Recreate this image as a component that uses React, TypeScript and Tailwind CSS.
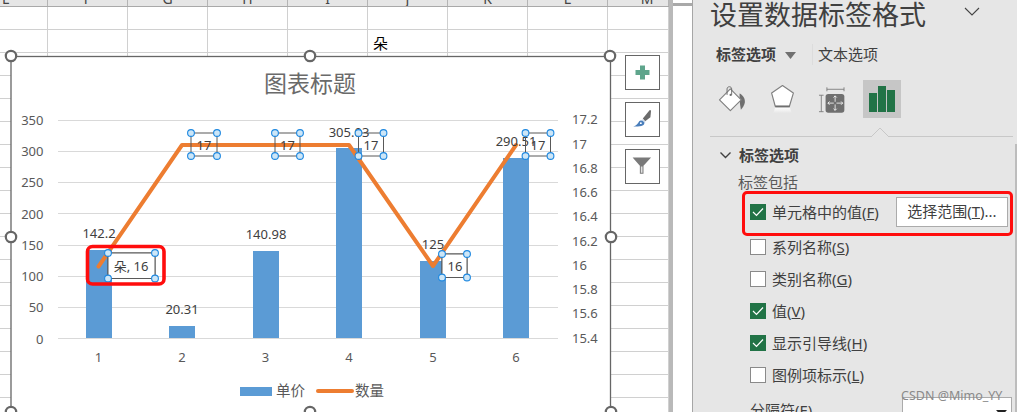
import React from "react";

const colWidths = [48, 80, 80, 80, 80, 80, 80, 80, 61];
const colLetters = ["E", "F", "G", "H", "I", "J", "K", "L", "M"];
const letterOffset = ["pr-[35px]", "pl-0", "pl-0", "pl-0", "pl-0", "pl-0", "pl-0", "pl-0", "pl-[18px]"];
const rowIndexes = Array.from({ length: 18 }, (_, i) => i);

const gridYs = [120.5, 151.5, 182.5, 213.5, 245.5, 276.5, 307.5, 338.5];
const leftAxis = ["350", "300", "250", "200", "150", "100", "50", "0"];
const leftAxisY = [120, 151, 182, 214, 245, 276, 307, 339];
const rightAxis: [string, number][] = [
  ["17.2", 119.5], ["17", 144], ["16.8", 168.5], ["16.6", 192.5], ["16.4", 216.5],
  ["16.2", 241], ["16", 265.5], ["15.8", 289.5], ["15.6", 313.5], ["15.4", 338],
];
const bars: [number, number][] = [[86, 250], [169, 326], [253, 251], [336, 148], [420, 261], [503, 158]];
const xLabels: [string, number][] = [["1", 98.5], ["2", 182], ["3", 265.5], ["4", 349], ["5", 433], ["6", 516]];
const valueLabels: [string, number, number][] = [
  ["142.2", 99, 233.5], ["20.31", 182, 309.5], ["140.98", 266, 234.5],
  ["305.03", 349, 132.5], ["125", 433, 244.5], ["290.51", 516, 141.5],
];
const cellLabels: [string, number, number][] = [
  ["17", 204, 145.5], ["17", 287.5, 145.5], ["17", 371, 145.5], ["17", 538, 145.5], ["16", 455, 266], ["朵, 16", 131, 266],
];
const boxes: [number, number, number, number][] = [
  [191, 133, 217, 156], [275, 133, 300, 156], [358.5, 133, 383.5, 156],
  [525.5, 133, 550.5, 156], [442, 254, 467, 277.5], [108, 253, 155, 278.5],
];
const handles: [number, number][] = [[11, 56], [310, 56], [610, 56], [11, 237], [611, 237], [11, 412], [310, 412], [611, 412]];

function Chart() {
  return (
    <svg className="absolute inset-0" width={669} height={412} viewBox="0 0 669 412">
      <rect x={11} y={56.5} width={599.5} height={360} fill="#fff" stroke="#666" strokeWidth={1.3} />
      {gridYs.map((y) => (
        <line key={y} x1={58} x2={558} y1={y} y2={y} stroke="#d9d9d9" strokeWidth={1} />
      ))}
      {bars.map(([x, y]) => (
        <rect key={x} x={x} y={y} width={26} height={338 - y} fill="#5b9bd5" />
      ))}
      <polyline
        points="98.5,266.5 182,145 265,145 349,145 433,266 516,145"
        fill="none"
        stroke="#ed7d31"
        strokeWidth={4}
        strokeLinecap="round"
        strokeLinejoin="round"
      />
      <text x={310} y={92} textAnchor="middle" fontSize={23} fill="#6a6a6a">图表标题</text>
      {leftAxis.map((t, i) => (
        <text key={t} x={43.5} y={leftAxisY[i] + 4.5} textAnchor="end" fontSize={13} fill="#595959">{t}</text>
      ))}
      {rightAxis.map(([t, y]) => (
        <text key={t} x={572} y={y + 4.5} fontSize={13} fill="#595959">{t}</text>
      ))}
      {xLabels.map(([t, x]) => (
        <text key={t} x={x} y={362} textAnchor="middle" fontSize={13} fill="#595959">{t}</text>
      ))}
      {valueLabels.map(([t, x, y]) => (
        <text key={t} x={x} y={y + 4.5} textAnchor="middle" fontSize={13} fill="#404040">{t}</text>
      ))}
      {boxes.map(([x1, y1, x2, y2]) => (
        <rect key={`${x1}-${y1}`} x={x1} y={y1} width={x2 - x1} height={y2 - y1} fill="none" stroke="#595959" strokeWidth={1} />
      ))}
      <rect x={108} y={253} width={47} height={25.5} fill="#fff" stroke="#595959" strokeWidth={1} />
      <rect x={442} y={254} width={25} height={23.5} fill="#fff" stroke="#595959" strokeWidth={1} />
      {cellLabels.map(([t, x, y]) => (
        <text key={`${t}-${x}`} x={x} y={y + 4.5} textAnchor="middle" fontSize={13} fill="#404040">{t}</text>
      ))}
      {boxes.flatMap(([x1, y1, x2, y2]) =>
        [[x1, y1], [x2, y1], [x1, y2], [x2, y2]].map(([cx, cy]) => (
          <circle key={`${cx}-${cy}`} cx={cx} cy={cy} r={3.4} fill="#cde6f7" stroke="#1e88e0" strokeWidth={1.1} />
        )),
      )}
      <rect x={87.5} y={246.5} width={76.5} height={37.5} rx={5} fill="none" stroke="#ff0d0d" strokeWidth={3.6} />
      <rect x={240} y={387} width={32} height={9} fill="#5b9bd5" />
      <text x={276} y={396} fontSize={14.5} fill="#595959">单价</text>
      <line x1={318} x2={352} y1={391} y2={391} stroke="#ed7d31" strokeWidth={4} strokeLinecap="round" />
      <text x={355} y={396} fontSize={14.5} fill="#595959">数量</text>
      {handles.map(([cx, cy]) => (
        <circle key={`${cx}-${cy}`} cx={cx} cy={cy} r={5.2} fill="#fff" stroke="#666" strokeWidth={2.2} />
      ))}
    </svg>
  );
}

function SheetGrid() {
  return (
    <div className="flex flex-col">
      <div className="flex h-[7px] bg-[#e6e6e6] border-b border-[#a9a9a9]">
        {colLetters.map((c, i) => (
          <div
            key={c}
            style={{ width: colWidths[i] }}
            className={`h-[6px] shrink-0 overflow-hidden border-r border-[#b4b4b4] flex items-end justify-center ${letterOffset[i]}`}
          >
            <span className="text-[14px] leading-[14px] text-[#444]">{c}</span>
          </div>
        ))}
      </div>
      {rowIndexes.map((r) => (
        <div key={r} className="flex h-[23px] shrink-0">
          {colWidths.map((w, i) => (
            <div key={i} style={{ width: w }} className="shrink-0 border-r border-b border-[#d0d0d0] overflow-hidden">
              {r === 1 && i === 5 ? <span className="block pl-[5px] text-[15px] leading-[27px] text-black">朵</span> : null}
            </div>
          ))}
        </div>
      ))}
    </div>
  );
}

function FloatButtons() {
  const cls = "w-[35px] h-[35px] border border-[#666] bg-white flex items-center justify-center";
  return (
    <div className="absolute left-[625px] top-[55px] flex flex-col gap-[12px]">
      <div className={cls}>
        <svg width={15} height={15} viewBox="0 0 15 15">
          <path d="M5 0.5h5v4.5h4.500v5h-4.500v4.500h-5v-4.500h-4.500v-5h4.500z" fill="#5fa58c" />
        </svg>
      </div>
      <div className={cls}>
        <svg width={33} height={33} viewBox="48 189 100 100">
          <path d="M120 210l4 2-2 20-16 12-7-8z" fill="#6b6b6b" />
          <path d="M98 238l9 8-3 5-10-9z" fill="#c9d8ea" />
          <path d="M70 260c9-2 14-9 18-16 4-4 12-2 15 4 3 9-9 13-33 12z" fill="#4a7ebb" />
          <circle cx={93} cy={250} r={3} fill="#fff" />
        </svg>
      </div>
      <div className={cls}>
        <svg width={33} height={33} viewBox="48 330 100 100">
          <path d="M68 353h56l-23 25v24H90v-24z" fill="#7a7a7a" />
          <path d="M93 380h5v19h-5z" fill="#e2e2e2" />
        </svg>
      </div>
    </div>
  );
}

function FillIcon() {
  return (
    <svg width={30} height={28} viewBox="20 30 90 85">
      <path d="M88 56c10 4 17 16 16 26-1 8-6 16-12 23-2-10-3-20-4-30z" fill="#6f6f6f" />
      <path d="M60 42l33 33-33 33-33-33z" fill="#fff" stroke="#808080" strokeWidth={3.5} strokeLinejoin="round" />
      <path d="M50 60V42c0-9 14-9 14 0v18" fill="none" stroke="#707070" strokeWidth={3} />
      <circle cx={61} cy={60} r={3.500} fill="#707070" />
    </svg>
  );
}

function ShapeIcon() {
  return (
    <svg width={28} height={30} viewBox="170 28 85 90">
      <defs>
        <linearGradient id="shapeFade" x1="0" y1="0" x2="0" y2="1">
          <stop offset="0" stopColor="#ffffff" />
          <stop offset="1" stopColor="#e6e6e6" />
        </linearGradient>
      </defs>
      <path d="M192 98h44l6 18h-56z" fill="url(#shapeFade)" />
      <path d="M214 32l33 23-12 40h-43l-11-40z" fill="#fff" stroke="#808080" strokeWidth={3.5} strokeLinejoin="round" />
      <rect x={192} y={93} width={44} height={5.5} fill="#6f6f6f" />
    </svg>
  );
}

function SizeIcon() {
  return (
    <svg width={28} height={27} viewBox="325 30 85 82">
      <g stroke="#777" strokeWidth={2.6} fill="none">
        <path d="M352 40h52M352 34v12M404 34v12" />
        <path d="M335 58v50M328 58h14M328 108h14" />
      </g>
      <rect x={348} y={54} width={57} height={57} rx={8} fill="#6f6f6f" />
      <g stroke="#fff" strokeWidth={2.4} fill="none">
        <path d="M355 82h18M381 82h19M377 60v18M377 86v18" />
        <path d="M360 77l-5 5 5 5M395 77l5 5-5 5M372 65l5-5 5 5M372 99l5 5 5-5" />
      </g>
    </svg>
  );
}

function CheckRow({ checked, label, hot, extra, className }: { checked: boolean; label: string; hot: string; extra?: React.ReactNode; className?: string }) {
  return (
    <div className={`flex items-center h-[32px] pl-[57px] ${className ?? ""}`}>
      <div className={`w-[16px] h-[16px] shrink-0 flex items-center justify-center border ${checked ? "bg-[#217346] border-[#217346]" : "bg-white border-[#8a8a8a]"}`}>
        {checked ? (
          <svg width={12} height={10} viewBox="0 0 12 10">
            <path d="M1 5l3.500 3.500L11 1.500" fill="none" stroke="#fff" strokeWidth={1.2} />
          </svg>
        ) : null}
      </div>
      <span className="ml-[6px] text-[15px] leading-[20px] text-[#404040] whitespace-nowrap">
        {label}(<u>{hot}</u>)
      </span>
      {extra}
    </div>
  );
}

function Pane() {
  return (
    <div className="relative w-[325px] h-[412px] shrink-0 bg-[#e6e6e6] border-l border-[#a6a6a6] overflow-hidden flex flex-col">
      <div className="flex items-center h-[30px] pl-[17px] shrink-0">
        <span className="text-[27px] leading-[30px] text-[#404040] whitespace-nowrap">设置数据标签格式</span>
        <svg className="ml-[38px] -mt-[6px]" width={16} height={10} viewBox="0 0 16 10">
          <path d="M1 1l7 7 7-7" fill="none" stroke="#444" strokeWidth={1.1} />
        </svg>
      </div>
      <div className="flex items-center h-[24px] mt-[12px] pl-[23px] shrink-0">
        <span className="text-[15px] font-bold text-[#404040] whitespace-nowrap">标签选项</span>
        <svg className="ml-[9px] mt-[2px]" width={11} height={7} viewBox="0 0 11 7">
          <path d="M0 0h11l-5.500 7z" fill="#707070" />
        </svg>
        <div className="ml-[16px] w-px h-[21px] bg-[#dcdcdc]" />
        <span className="ml-[5px] text-[15px] text-[#404040] whitespace-nowrap">文本选项</span>
      </div>
      <div className="flex mt-[14px] pl-[14px] h-[38px] shrink-0">
        <div className="w-[50px] flex items-center justify-center"><FillIcon /></div>
        <div className="w-[50px] flex items-center justify-center"><ShapeIcon /></div>
        <div className="w-[50px] flex items-center justify-center"><SizeIcon /></div>
        <div className="w-[50px] flex justify-center">
          <div className="w-[38px] h-[38px] bg-[#c6c6c6] flex items-end justify-center gap-[1px] pb-[6px]">
            <div className="w-[8px] h-[19px] bg-[#217346]" />
            <div className="w-[8px] h-[26px] bg-[#217346]" />
            <div className="w-[8px] h-[22px] bg-[#217346]" />
          </div>
        </div>
      </div>
      <div className="relative mt-[18px] ml-[17px] mr-[4px] h-px bg-[#c8c8c8] shrink-0">
        <svg className="absolute left-[161px] -top-[9px]" width={18} height={10} viewBox="0 0 18 10">
          <path d="M0 10l9-9 9 9" fill="#e6e6e6" stroke="#c8c8c8" strokeWidth={1} />
        </svg>
      </div>
      <div className="flex items-center h-[24px] mt-[6px] pl-[27px] shrink-0">
        <svg width={11} height={7} viewBox="0 0 11 7">
          <path d="M0.500 0.500l5 5 5-5" fill="none" stroke="#404040" strokeWidth={1.4} />
        </svg>
        <span className="ml-[8px] text-[15px] font-bold text-[#404040] whitespace-nowrap">标签选项</span>
      </div>
      <div className="h-[20px] mt-[5px] pl-[45px] text-[15px] leading-[20px] text-[#595959] shrink-0">标签包括</div>
      <div className="mt-[4px] flex flex-col shrink-0">
        <CheckRow
          checked
          label="单元格中的值"
          hot="F"
          className="mb-[3px]"
          extra={
            <div className="ml-[17px] w-[112px] h-[30px] -mt-[1px] bg-white border border-[#ababab] flex items-center justify-center text-[15px] text-[#404040] whitespace-nowrap">
              选择范围(<u>T</u>)...
            </div>
          }
        />
        <CheckRow checked={false} label="系列名称" hot="S" />
        <CheckRow checked={false} label="类别名称" hot="G" />
        <CheckRow checked label="值" hot="V" />
        <CheckRow checked label="显示引导线" hot="H" />
        <CheckRow checked={false} label="图例项标示" hot="L" />
      </div>
      <div className="flex mt-[6px] pl-[57px] shrink-0">
        <span className="w-[152px] shrink-0 mt-[3px] text-[15px] leading-[20px] text-[#404040] whitespace-nowrap">分隔符(<u>E</u>)</span>
        <div className="w-[110px] h-[24px] bg-white border border-[#ababab] relative">
          <svg className="absolute right-[4px] top-[12px]" width={11} height={6} viewBox="0 0 11 6">
            <path d="M0 0h11l-5.500 6z" fill="#222" />
          </svg>
        </div>
      </div>
      <div className="absolute left-[322px] top-[144px] w-[2px] h-[268px] bg-[#bdbdbd]" />
      <div className="absolute left-[49px] top-[191px] w-[271px] h-[45px] border-[3.5px] border-[#ff0d0d] rounded-[5px]" />
    </div>
  );
}

export default function App() {
  return (
    <div className="relative w-[1017px] h-[412px] overflow-hidden flex bg-white font-['Noto_Sans','Noto_Sans_CJK_SC',sans-serif]">
      <div className="relative w-[669px] h-[412px] shrink-0 overflow-hidden">
        <SheetGrid />
        <Chart />
        <FloatButtons />
      </div>
      <div className="w-[4px] h-[412px] shrink-0 bg-[#b9b9b9]" />
      <div className="w-[19px] h-[412px] shrink-0 bg-white flex flex-col">
        <div className="h-[3px] bg-white" />
        <div className="h-[3px] bg-[#a9a9a9]" />
      </div>
      <Pane />
      <div className="absolute left-[901px] top-[388px] text-[12.5px] leading-[16px] text-[#8a8a8a] whitespace-nowrap">CSDN @Mimo_YY</div>
    </div>
  );
}
